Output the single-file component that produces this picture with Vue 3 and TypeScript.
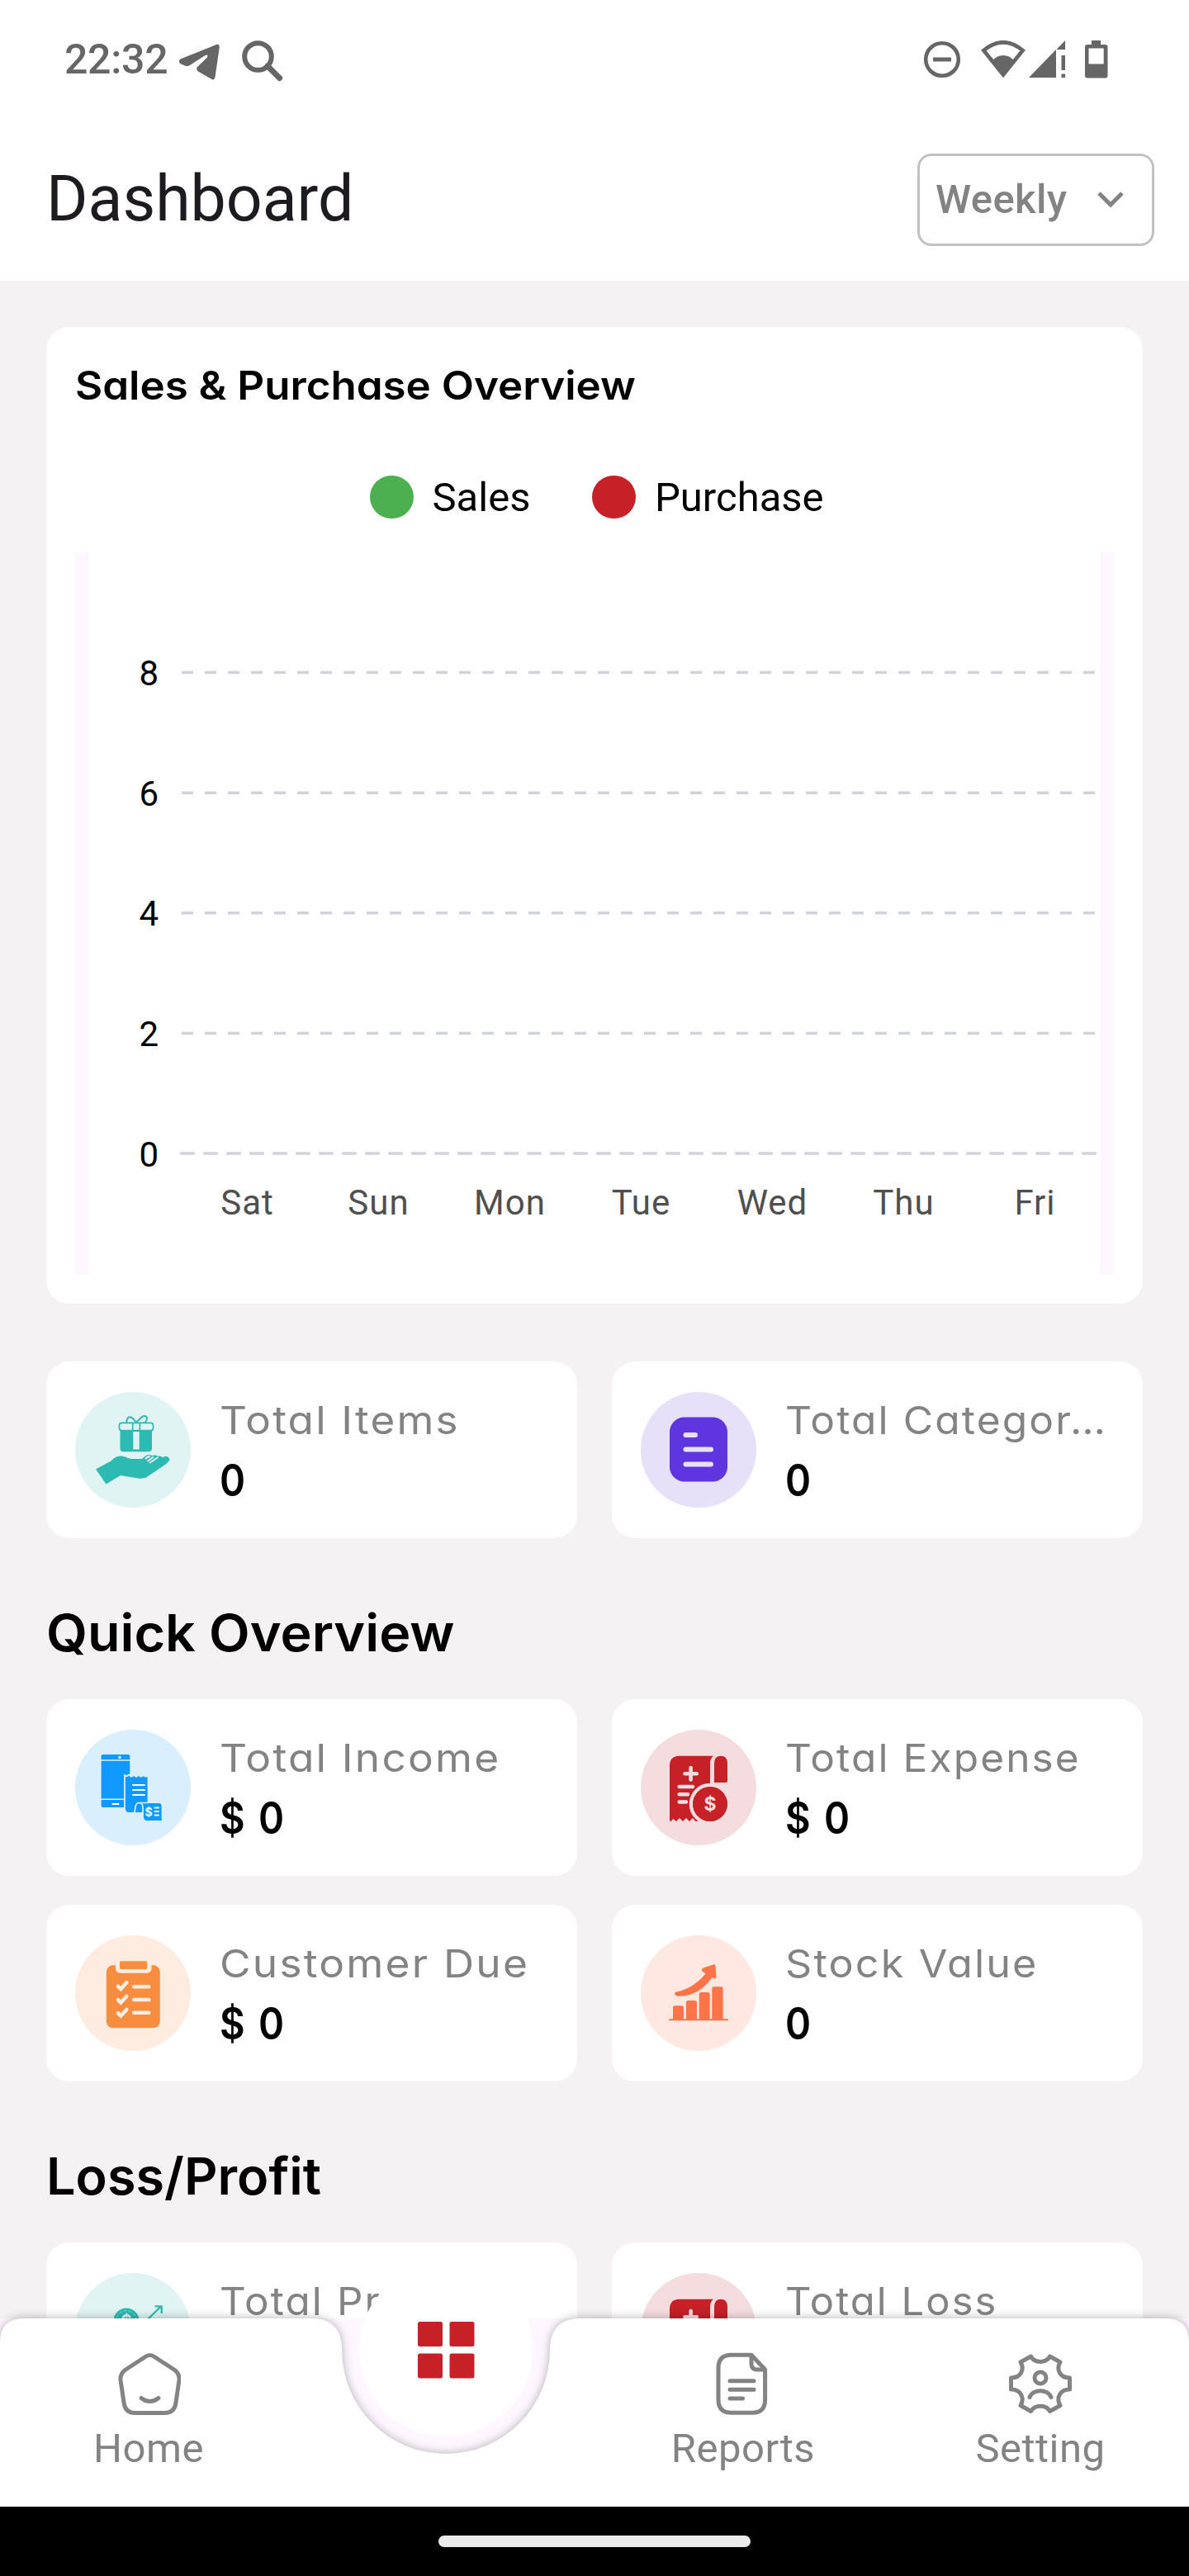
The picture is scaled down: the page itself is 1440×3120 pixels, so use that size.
<script setup lang="ts">
interface Stat {
  label: string
  value: string
  icon: string
  color: string
  tint: string
  stretch: number
}

interface Section {
  title: string
  stretch: number
  stats: Stat[]
}

const sections: Section[] = [
  {
    title: '',
    stretch: 1,
    stats: [
      { label: 'Total Items', value: '0', icon: 'gift', color: '#2cbab2', tint: '#e0f4f3', stretch: 1.09 },
      { label: 'Total Categor…', value: '0', icon: 'category', color: '#5e35df', tint: '#e6e0f8', stretch: 1.057 },
    ],
  },
  {
    title: 'Quick Overview',
    stretch: 1.042,
    stats: [
      { label: 'Total Income', value: '$ 0', icon: 'income', color: '#1199ff', tint: '#daeffe', stretch: 1.094 },
      { label: 'Total Expense', value: '$ 0', icon: 'expense', color: '#c52127', tint: '#f5dddf', stretch: 1.055 },
      { label: 'Customer Due', value: '$ 0', icon: 'due', color: '#f88d3f', tint: '#feece0', stretch: 1.095 },
      { label: 'Stock Value', value: '0', icon: 'stock', color: '#fe7348', tint: '#fee8e1', stretch: 1.07 },
    ],
  },
  {
    title: 'Loss/Profit',
    stretch: 1.015,
    stats: [
      { label: 'Total Profit', value: '$ 0', icon: 'profit', color: '#2cbab2', tint: '#e0f4f3', stretch: 1.05 },
      { label: 'Total Loss', value: '$ 0', icon: 'expense', color: '#c52127', tint: '#f5dddf', stretch: 1.04 },
    ],
  },
]

const ticks = [8, 6, 4, 2, 0]
const days = ['Sat', 'Sun', 'Mon', 'Tue', 'Wed', 'Thu', 'Fri']
const tickY = (t: number): number => 728 - t * 72.8
const dayX = (i: number): number => 208.5 + i * 159
const widen = (s: number): { transform: string } => ({ transform: `scaleX(${s})` })
</script>

<template>
  <div class="screen">
    <div class="status">
      <span class="clock">22:32</span>
      <svg class="tg" width="54" height="50" viewBox="0 0 54 50" fill="#666">
        <path d="M3.5 21.5 47 4Q51 3 50.8 7L45.5 43.500Q44.500 47.500 41.500 46L25 36.500Q22 34 24 31L36 19.500Q37.500 15.500 33.500 17L15 29Q12 31 9 29.500L4 27.500Q0 25 3.500 21.500Z" />
      </svg>
      <svg class="search" width="50" height="50" viewBox="0 0 50 50" fill="none" stroke="#666">
        <circle cx="19.500" cy="19.500" r="16.300" stroke-width="6" />
        <path d="M31 31 45.500 45.500" stroke-width="7" stroke-linecap="round" />
      </svg>
      <div class="grow"></div>
      <svg width="46" height="46" viewBox="0 0 46 46" fill="none" stroke="#666">
        <circle cx="23" cy="23" r="19.800" stroke-width="4.600" />
        <path d="M12 23H34" stroke-width="5" />
      </svg>
      <svg class="wifi" width="54" height="46" viewBox="0 0 54 46">
        <path d="M3.300 12Q27-7.500 50.700 12L27 41.500Z" fill="none" stroke="#666" stroke-width="4.600" />
        <path d="M14 24Q20 18 27 18T40 24L27 42Z" fill="#666" />
      </svg>
      <svg class="signal" width="45" height="46" viewBox="0 0 45 46" fill="#666">
        <path d="M0 45 33 11V45ZM44 0V11H33.500ZM39.500 18H44V36H39.500ZM39.500 40.500H44V45H39.500Z" />
      </svg>
      <svg class="battery" width="28" height="46" viewBox="0 0 28 46">
        <path fill="#666" fill-rule="evenodd" d="M8 0H19V5H24.500Q27.500 5 27.500 8V42.500Q27.500 45.500 24.500 45.500H3Q0 45.500 0 42.500V8Q0 5 3 5H8ZM4.500 9.500V28.500H22.700V9.500Z" />
      </svg>
    </div>

    <header class="header">
      <h1>Dashboard</h1>
      <div class="select">
        <span>Weekly</span>
        <svg width="34" height="22" viewBox="0 0 34 22" fill="none" stroke="#838383" stroke-width="5">
          <path d="M3 3 17 17 31 3" />
        </svg>
      </div>
    </header>

    <main>
      <section class="overview">
        <h2 class="wide" :style="widen(1.064)">Sales &amp; Purchase Overview</h2>
        <div class="legend">
          <i class="dot sales"></i><span>Sales</span>
          <i class="dot purchase"></i><span>Purchase</span>
        </div>
        <div class="chart">
          <svg width="1258" height="875" viewBox="0 0 1258 875">
            <g v-for="t in ticks" :key="t">
              <line
                :x1="t ? 129 : 127.300" :x2="t ? 1235.500 : 1237.500" :y1="tickY(t)" :y2="tickY(t)"
                stroke="#d1d3da" stroke-width="3.500" :stroke-dasharray="t ? '14 14' : '17.500 10.500'"
              />
              <text x="101" :y="tickY(t) + 15.5" text-anchor="end" class="tick">{{ t }}</text>
            </g>
            <text v-for="(d, i) in days" :key="d" :x="dayX(i)" y="802" text-anchor="middle" class="day">{{ d }}</text>
          </svg>
        </div>
      </section>

      <section v-for="(s, n) in sections" :key="n" class="group" :class="{ first: !s.title }">
        <h2 v-if="s.title" class="heading wide" :style="widen(s.stretch)">{{ s.title }}</h2>
        <div class="cards">
          <article v-for="c in s.stats" :key="c.label" class="card">
            <svg width="140" height="140" viewBox="0 0 140 140">
              <circle cx="70" cy="70" r="70" :fill="c.tint" />
              <g v-if="c.icon === 'gift'" :fill="c.color">
                <path d="M54.500 45.500H93V68Q93 72.300 88.500 72.300H59Q54.500 72.300 54.500 68Z" />
                <rect x="53.500" y="37.300" width="41" height="9.400" rx="3" :fill="c.tint" :stroke="c.color" stroke-width="1.700" />
                <path d="M69.700 37V46M78.300 37V46" fill="none" :stroke="c.color" stroke-width="1.700" />
                <path d="M70.300 48H77.700V69.500H70.300Z" :fill="c.tint" />
                <path d="M74 37C70 31 66 28 63.500 32Q62 35 62.500 37M74 37C79 32 83 26.500 86.500 30Q88 33 84.500 37" fill="none" :stroke="c.color" stroke-width="2" />
                <path d="M25 93.500 43.500 83.500C50 76.500 56 76.500 62 79Q66 81.500 74 81H81C85 76.500 90 74.500 93 77Q97 75.500 100 77.800Q104 76.500 106 79.500C110 76 115 79 114.500 82.500Q111 87 106 90L89 101.500Q84 105.500 76 104.500L55 101 37.500 111.500Z" />
                <path d="M85 81Q88 77.500 91 78M90 86 100.500 79M87.500 84 95 78.500" fill="none" :stroke="c.tint" stroke-width="2" />
              </g>
              <g v-else-if="c.icon === 'category'">
                <rect x="35" y="30.500" width="70" height="78" rx="18" :fill="c.color" />
                <path d="M54.500 52H66M54.500 69.500H85M54.500 87.500H85" fill="none" :stroke="c.tint" stroke-width="6" stroke-linecap="round" />
              </g>
              <g v-else-if="c.icon === 'income'" :fill="c.color">
                <rect x="31.600" y="30" width="34.700" height="64" rx="2" />
                <path d="M31 37H67M31 84.200H67" fill="none" :stroke="c.tint" stroke-width="1.500" />
                <circle cx="54" cy="33.500" r="1.700" fill="#fff" />
                <path d="M45.500 90H52.500" stroke="#fff" stroke-width="2" stroke-linecap="round" />
                <path
                  d="M60 55 62.500 56.500 65 54.500 68 57 71 55 74 57 77 55 80 57 83 55 85.500 57 88.500 55V88H101Q105.500 88 105.500 92V107Q105.500 110.500 108 111H87Q82 111 82 105V101H65Q60 101 60 95Z"
                  :stroke="c.tint" stroke-width="1.800"
                />
                <path d="M71 101Q73 98 73 93Q74 88.500 77.500 88.500Q82 89 82 94V101M77.500 88.500H89" fill="none" :stroke="c.tint" stroke-width="1.700" />
                <path d="M70 67H84M70 73H84M70 79H84M96.500 94.500H101M96.500 99H101M96.500 103.500H101" fill="none" stroke="#f2faff" stroke-width="1.900" stroke-linecap="round" />
                <text x="89" y="104.500" text-anchor="middle" class="glyph" font-size="14" fill="#f2faff">$</text>
              </g>
              <g v-else-if="c.icon === 'expense'" :fill="c.color">
                <path d="M47 31.700H88Q84 35 84 41V111L70 110.500 66.500 111 63 107 59 111 55 107 51 111 47 107 43 111 39.500 108 36.500 111Q35 111 35 109V44Q35 31.700 47 31.700Z" />
                <path d="M89 64V41Q89 31.700 97 31.700T105 41V62Q105 64 103 64Z" />
                <path d="M60.600 46V60.500M53.500 53.200H67.800" fill="none" :stroke="c.tint" stroke-width="4.600" stroke-linecap="round" />
                <path d="M46.700 69H63M46.700 78.300H57M46.700 87.500H55" fill="none" :stroke="c.tint" stroke-width="4.500" stroke-linecap="round" />
                <circle cx="84" cy="90" r="23" :stroke="c.tint" stroke-width="4.500" />
                <path d="M70.500 108.500 76 112.500H92L97 108.500 91 118H76Z" :fill="c.tint" />
                <circle cx="84" cy="90" r="21" />
                <text x="84" y="98.300" text-anchor="middle" class="glyph" font-size="23" :fill="c.tint">$</text>
              </g>
              <g v-else-if="c.icon === 'due'" :fill="c.color">
                <rect x="37.800" y="36.300" width="65" height="76" rx="8" />
                <path d="M49 35H92.500V40Q92.500 45.700 86.500 45.700H55Q49 45.700 49 40Z" :fill="c.tint" />
                <rect x="54" y="31.300" width="33.200" height="9.700" rx="1.500" />
                <g fill="none" :stroke="c.tint" stroke-width="4.600" stroke-linecap="round">
                  <path d="M52 61.800 55.300 65 62.300 57.300M71.300 62.300H89.300" />
                  <path d="M52 78.300 55.300 81.500 62.300 74M71.300 78H89.300" />
                  <path d="M52 94.300 55.300 97.500 62.300 90M71.300 93.700H89.300" />
                </g>
              </g>
              <g v-else-if="c.icon === 'stock'" :fill="c.color">
                <path d="M39 102V88Q39 85.300 41.500 85.300H49.500Q52 85.300 52 88V102ZM55 102V81.500Q55 79 57.500 79H65.500Q68 79 68 81.500V102ZM70.700 102V71.500Q70.700 69 73.200 69H81.200Q83.700 69 83.700 71.500V102ZM86.300 102V65Q86.300 62.300 88.800 62.300H97Q99.600 62.300 99.600 65V102Z" />
                <rect x="34" y="101.300" width="72" height="2" rx="1" />
                <path d="M41.500 69Q50 67.500 58 63.500Q70 57 78.500 46.500L74.500 43.500Q73 41 76 39.500L88.500 35.300Q90.500 35 90.500 37.500L91.500 50Q91 53 89 52.500L86.500 51Q76 66 61 71.500Q53 73.800 45 73.700Q40 72.500 41.500 69Z" />
              </g>
              <g v-else :fill="c.color">
                <circle cx="62" cy="58" r="15.500" />
                <circle cx="62" cy="58" r="12.300" fill="none" stroke="#7fd5d0" stroke-width="1" stroke-dasharray="4 2" />
                <text x="62" y="65" text-anchor="middle" class="glyph" font-size="20" :fill="c.tint">$</text>
                <path d="M84 60 104 40.500M96.500 40.300H104.700V49" fill="none" :stroke="c.color" stroke-width="2.300" />
              </g>
            </svg>
            <div class="info">
              <span class="label wide" :style="widen(c.stretch)">{{ c.label }}</span>
              <strong>{{ c.value }}</strong>
            </div>
          </article>
        </div>
      </section>
    </main>

    <nav class="nav">
      <svg class="shape" width="1440" height="228" viewBox="0 0 1440 228">
        <path d="M0 228V29Q0 0 29 0H378C402 0 414 14 414 38A126 126 0 0 0 666 38C666 14 678 0 702 0H1411Q1440 0 1440 29V228Z" fill="#fff" />
      </svg>
      <div class="fab">
        <svg width="69" height="69" viewBox="0 0 69 69" fill="#c52127">
          <rect width="30" height="30" rx="2.500" /><rect x="38.500" width="30" height="30" rx="2.500" />
          <rect y="38.500" width="30" height="30" rx="2.500" /><rect x="38.500" y="38.500" width="30" height="30" rx="2.500" />
        </svg>
      </div>
      <div class="item">
        <svg width="78" height="78" viewBox="-1 0 78 78">
          <path d="M34 6.500Q39.500 2.500 45 6.500L69.500 22.500Q75.500 27 75 34.500L71 62Q69.500 74.500 57.500 74.500H21.500Q9.500 74.500 8 62L4 34.500Q3.500 27 9.500 22.500Z" />
          <path d="M29 56.500Q39.500 64.500 50 56.500" />
        </svg>
        <span>Home</span>
      </div>
      <div class="item"></div>
      <div class="item">
        <svg width="78" height="78" viewBox="0 0 78 78">
          <path d="M49 4.300H25Q9 4.300 9 20V58.500Q9 74.300 25 74.300H50Q65.600 74.300 65.600 58.500V22Z" stroke-linejoin="round" />
          <path d="M49 5V15Q49 22 56 22H65" />
          <path d="M23 35.700H52M23 46.300H52M23 57H38.500" />
        </svg>
        <span>Reports</span>
      </div>
      <div class="item">
        <svg width="78" height="78" viewBox="-1 -1 78 78" stroke-linejoin="round">
          <path d="M26.500 5 14 12C19 20 15 31 2.500 31V45C15 45 19 56 14 64.500L26.500 71.500C31 63 45 63 49.500 71.500L62 64.500C57 56 61 45 73.500 45V31C61 31 57 20 62 12L49.500 5C45 13.500 31 13.500 26.500 5Z" />
          <circle cx="38" cy="31" r="7" />
          <path d="M25 54.500C29 44 47 44 51 54.500" />
        </svg>
        <span>Setting</span>
      </div>
    </nav>
    <div class="system"><i></i></div>
  </div>
</template>

<style>
body { margin: 0; }
</style>

<style scoped>
.screen {
  position: relative;
  width: 1440px;
  height: 3120px;
  overflow: hidden;
  background: #f4f2f3;
  font-family: Roboto, "Liberation Sans", sans-serif;
}
svg { display: block; flex: none; }
h1, h2 { margin: 0; }
.status {
  display: flex;
  align-items: center;
  box-sizing: border-box;
  height: 144px;
  padding: 0 98px 0 78px;
  background: #fff;
}
.clock { width: 137px; font-size: 50px; line-height: 60px; font-weight: 500; letter-spacing: -0.3px; color: #666; }
.tg { margin-top: 6px; }
.search { margin: 3px 0 0 24px; }
.grow { flex: 1; }
.wifi { margin-left: 24px; }
.signal { margin-left: 4px; }
.battery { margin-left: 23px; }
.header {
  display: flex;
  align-items: center;
  justify-content: space-between;
  box-sizing: border-box;
  height: 196px;
  padding: 0 42px 0 56px;
  background: #fff;
}
h1 { padding-bottom: 2px; font-size: 77px; line-height: 90px; font-weight: 400; color: #1d1b20; }
.select {
  display: flex;
  align-items: center;
  justify-content: space-between;
  box-sizing: border-box;
  width: 287px;
  height: 112px;
  padding: 0 33px 0 19px;
  border: 3.5px solid #c2c2c2;
  border-radius: 17px;
  font-size: 49px;
  line-height: 60px;
  font-weight: 500;
  letter-spacing: 0.4px;
  color: #838383;
}
main { padding: 56px 56px 0; }
.overview {
  height: 1183px;
  padding: 36px 35px 0;
  box-sizing: border-box;
  border-radius: 28px;
  background: #fff;
}
.overview h2, .heading, .info {
  font-family: Inter, "Liberation Sans", sans-serif;
  font-feature-settings: "cv11";
}
.wide { width: max-content; transform-origin: left center; white-space: nowrap; }
.overview h2 { font-size: 48px; line-height: 70px; font-weight: 600; }
.legend {
  display: flex;
  align-items: center;
  height: 52px;
  margin-top: 74px;
  padding-left: 357px;
  font-size: 49px;
  line-height: 56px;
}
.legend span { padding-top: 2px; }
.dot { width: 52.500px; height: 52.500px; margin-right: 23px; border-radius: 50%; }
.sales { background: #4caf50; }
.purchase { margin-left: 75px; background: #c52127; }
.chart {
  display: flex;
  justify-content: center;
  box-sizing: border-box;
  height: 875px;
  margin-top: 41px;
  border: solid #fef7ff;
  border-width: 0 17px;
}
.tick { font-size: 42px; fill: #000; }
.day { font-size: 42px; fill: #4f4f4f; letter-spacing: 1px; }
.group.first { padding-top: 70px; }
.heading { margin: 75.500px 0 40px; font-size: 62px; line-height: 80px; font-weight: 600; }
.cards { display: grid; grid-template-columns: 643px 643px; gap: 35.500px 42px; }
.card {
  display: flex;
  align-items: center;
  box-sizing: border-box;
  height: 213.500px;
  padding: 0 35px;
  border-radius: 28px;
  background: #fff;
}
.info { display: flex; flex-direction: column; margin-left: 35px; line-height: 72px; }
.label { font-size: 47px; color: #838383; letter-spacing: 2px; }
.info strong {
  padding-top: 1px;
  margin-bottom: -1px;
  font-size: 53px;
  font-weight: 600;
  word-spacing: 5px;
  white-space: nowrap;
  transform: scaleX(0.89);
  transform-origin: left center;
}
.glyph { font-family: Inter, sans-serif; font-weight: 700; }
.nav {
  position: absolute;
  left: 0;
  bottom: 84px;
  display: flex;
  width: 1440px;
  height: 228px;
  background: #fef7ff;
}
.shape { position: absolute; left: 0; top: 0; overflow: visible; filter: drop-shadow(0 0 6px rgba(0, 0, 0, 0.3)); }
.fab {
  position: absolute;
  left: 435px;
  top: -67px;
  display: flex;
  align-items: center;
  justify-content: center;
  width: 210px;
  height: 210px;
  border-radius: 50%;
  background: #fff;
}
.item {
  position: relative;
  display: flex;
  flex: 1;
  flex-direction: column;
  align-items: center;
  gap: 10px;
  padding-top: 40px;
  font-size: 49px;
  line-height: 60px;
  letter-spacing: 0.500px;
  color: #838383;
}
.item svg { fill: none; stroke: #838383; stroke-width: 5; stroke-linecap: round; }
.system {
  position: absolute;
  left: 0;
  bottom: 0;
  display: flex;
  align-items: center;
  justify-content: center;
  width: 1440px;
  height: 84px;
  background: #000;
}
.system i { width: 378px; height: 14px; border-radius: 7px; background: #ebebeb; }
</style>
